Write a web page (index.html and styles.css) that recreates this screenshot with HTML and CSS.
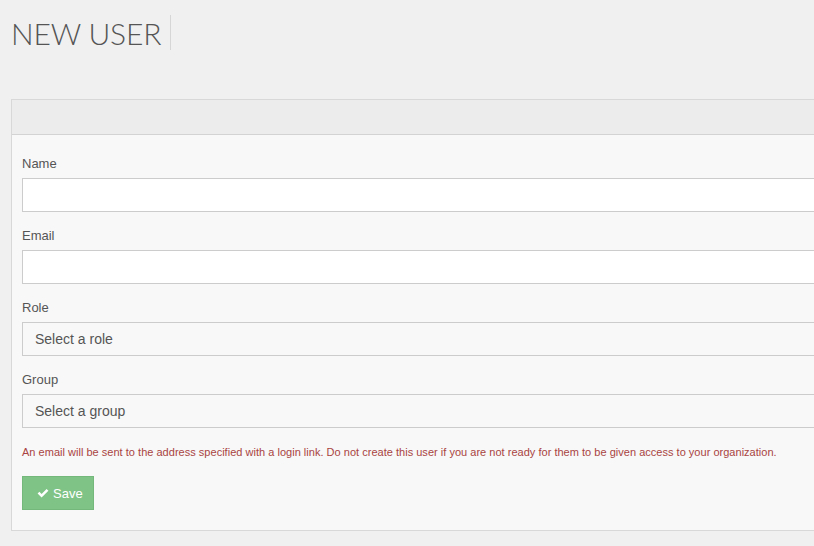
FILE: index.html
```html
<!DOCTYPE html>
<html lang="en">
<head>
  <meta charset="UTF-8" />
  <meta name="viewport" content="width=device-width, initial-scale=1.0" />
  <title>New User</title>
  <link rel="stylesheet" href="styles.css">
</head>
<body>

  <!-- Page Title -->
  <div class="page-header">
    <h1>NEW USER</h1>
  </div>

  <!-- New User Form -->
  <div class="panel">
    <div class="panel-heading"></div>
    <div class="panel-body">
      <div class="form-group">
        <label for="name">Name</label>
        <input type="text" id="name" />
      </div>
      <div class="form-group">
        <label for="email">Email</label>
        <input type="text" id="email" />
      </div>
      <div class="form-group">
        <label for="role">Role</label>
        <div class="select" id="role">Select a role</div>
      </div>
      <div class="form-group">
        <label for="group">Group</label>
        <div class="select" id="group">Select a group</div>
      </div>
      <p class="note">An email will be sent to the address specified with a login link. Do not create this user if you are not ready for them to be given access to your organization.</p>
      <button class="btn-save">
        <svg width="12" height="11" viewBox="0 0 12 11"><path d="M0.6 5.6 L2.4 3.8 L4.6 6 L9.6 1 L11.4 2.8 L4.6 9.6 Z" fill="#fff"/></svg>
        Save
      </button>
    </div>
  </div>

</body>
</html>
```

FILE: styles.css
```css
body {
  margin: 0;
  padding: 0 0 0 11px;
  background-color: #f0f0f0;
  font-family: Arial, "Liberation Sans", sans-serif;
  overflow: hidden;
}

.page-header {
  display: flex;
  padding-top: 15px;
  margin-bottom: 49px;
}

h1 {
  margin: 0;
  height: 35px;
  padding-right: 9px;
  border-right: 1px solid #d6d6d6;
  font-family: Lato, sans-serif;
  font-weight: 300;
  font-size: 30px;
  letter-spacing: -0.15px;
  line-height: 36px;
  color: #555;
}

/* the panel runs on past the right edge of the window */
.panel {
  background: #f8f8f8;
  border: 1px solid #d8d8d8;
  border-right: none;
}

.panel-heading {
  height: 34px;
  background: #ececec;
  border-bottom: 1px solid #d3d3d3;
}

.panel-body {
  padding: 20px 0 20px 10px;
}

.form-group {
  margin-bottom: 15px;
}

label {
  display: block;
  font-size: 13px;
  line-height: 18px;
  color: #555;
  margin-bottom: 5px;
}

input, .select {
  display: block;
  box-sizing: border-box;
  width: 100%;
  height: 34px;
  border: 1px solid #ccc;
  border-right: none;
  font-family: Arial, "Liberation Sans", sans-serif;
  font-size: 14px;
  color: #555;
}

input {
  background: #fff;
  padding: 6px 12px;
}

.select {
  background: #f8f8f8;
  padding: 0 12px;
  line-height: 32px;
}

.note {
  margin: 0 0 16px 0;
  padding-top: 1px;
  font-size: 11px;
  letter-spacing: 0.02px;
  line-height: 16px;
  color: #a94442;
}

.btn-save {
  display: flex;
  align-items: center;
  gap: 4px;
  height: 34px;
  width: 72px;
  padding: 0 0 0 14px;
  background-color: #80c387;
  border: 1px solid #74b97b;
  color: white;
  font-family: Arial, "Liberation Sans", sans-serif;
  font-size: 13px;
}
```
